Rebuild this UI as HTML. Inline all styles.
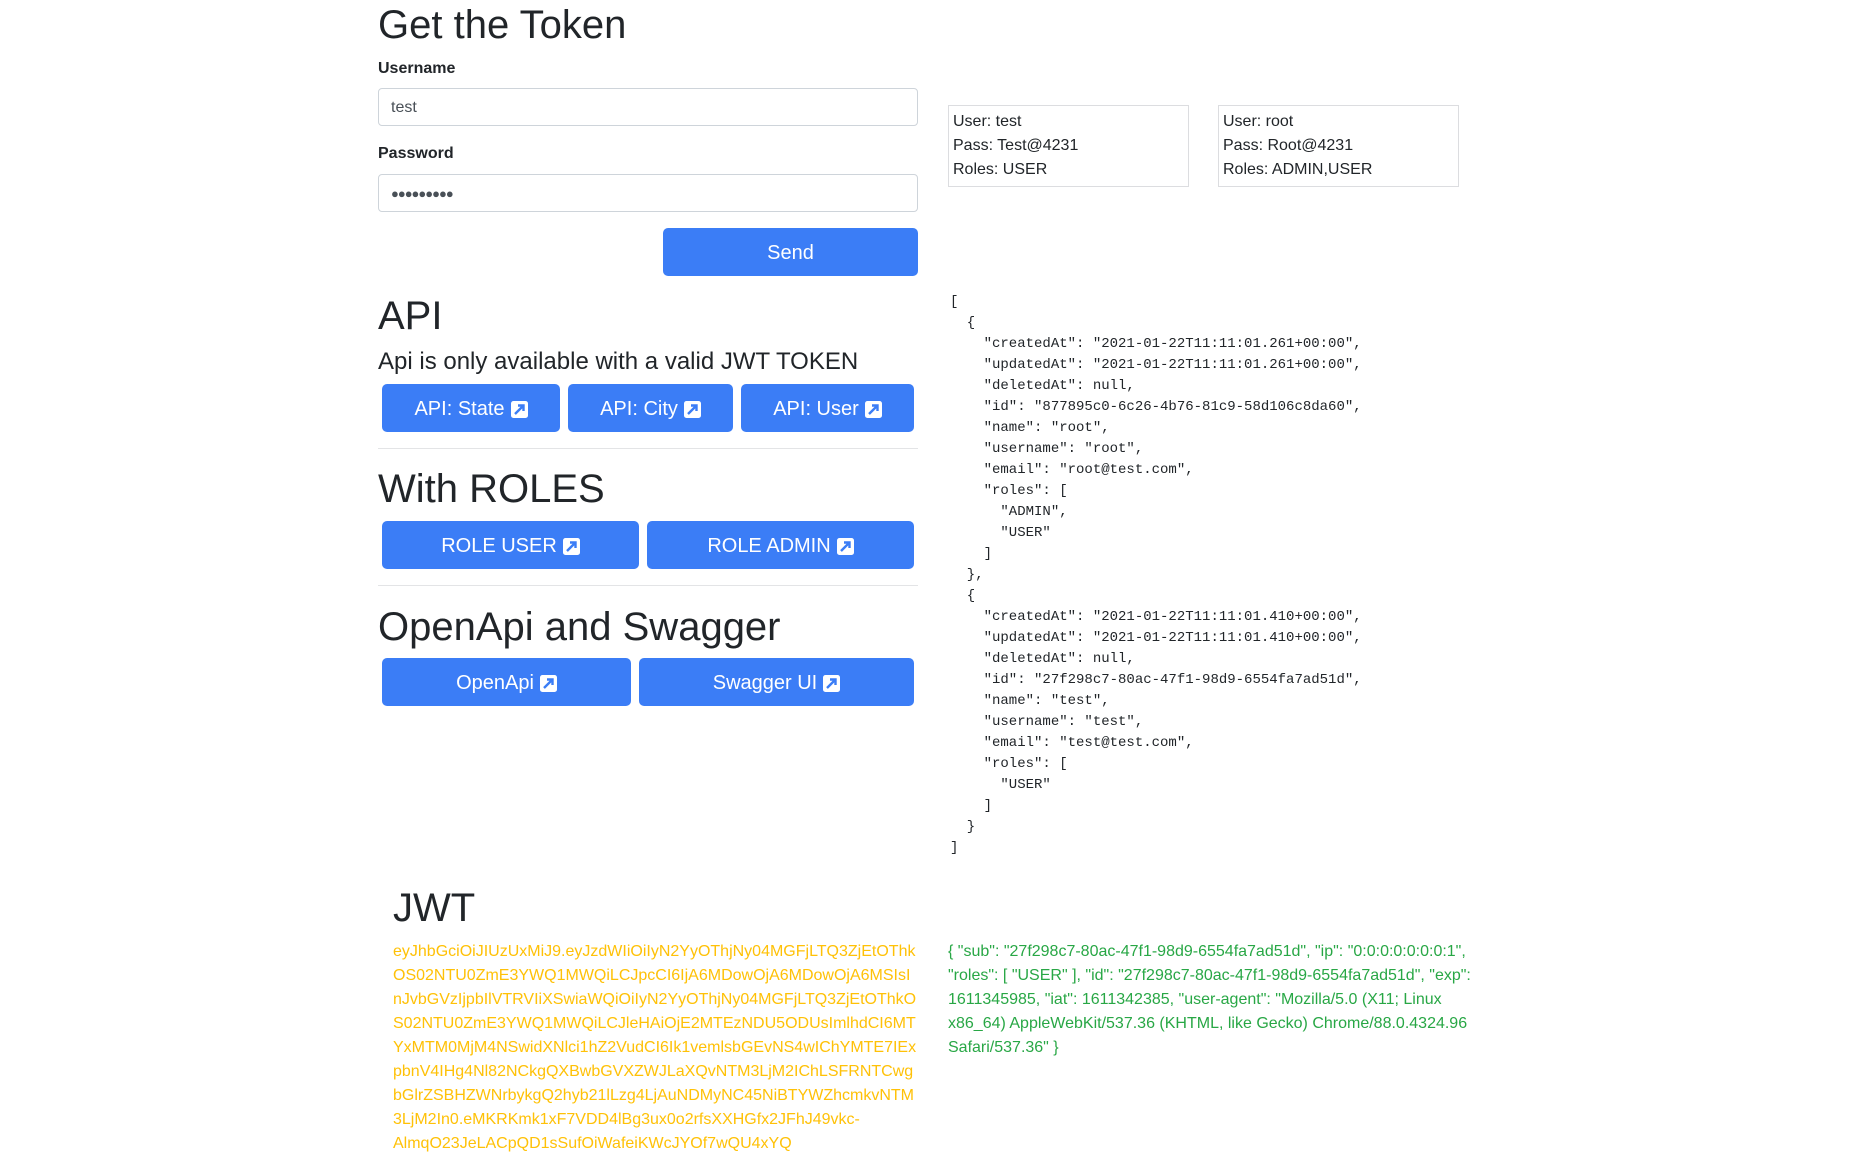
<!DOCTYPE html>
<html><head><meta charset="utf-8">
<style>
*{box-sizing:border-box;margin:0;padding:0}
body{width:1866px;height:1163px;background:#fff;font-family:"Liberation Sans",Arial,sans-serif;color:#212529;position:relative;overflow:hidden;font-size:16px;line-height:24px}
.a{position:absolute}
h1{position:absolute;font-size:40px;font-weight:500;line-height:48px;white-space:nowrap}
.lbl{position:absolute;font-weight:700;font-size:16px;line-height:24px}
.inp{position:absolute;left:378px;width:540px;height:38px;border:1px solid #ced4da;border-radius:4px;padding:0 12px;line-height:38px;color:#495057}
.btn{position:absolute;background:#3b7df6;color:#fff;border-radius:5px;font-size:20px;display:flex;align-items:center;justify-content:center;height:48px;white-space:nowrap;padding-top:2px}
.btn svg{margin-left:6px}
hr{position:absolute;left:378px;width:540px;border:0;border-top:1px solid #e3e4e6}
.box{position:absolute;top:105px;height:82px;border:1px solid #dcdde0;padding:4px 4px 0;width:241px}
pre{position:absolute;left:950px;top:292px;font-family:"Liberation Mono",monospace;font-size:14px;line-height:21px;color:#212529}
.tok{position:absolute;left:393px;top:940px;color:#ffc107;white-space:nowrap}
.grn{position:absolute;left:948px;top:940px;color:#28a745;white-space:nowrap}
</style></head><body>
<h1 style="left:378px;top:1px">Get the Token</h1>
<div class="lbl" style="left:378px;top:57px">Username</div>
<div class="inp" style="top:88px">test</div>
<div class="lbl" style="left:378px;top:142px">Password</div>
<div class="inp" style="top:174px;font-size:13px;letter-spacing:-1px">●●●●●●●●●</div>
<div class="btn" style="left:663px;top:228px;width:255px">Send</div>

<h1 style="left:378px;top:292px">API</h1>
<div class="a" style="left:378px;top:347px;font-size:24px;line-height:29px;white-space:nowrap">Api is only available with a valid JWT TOKEN</div>
<div class="btn" style="left:382px;top:384px;width:178px">API: State <svg width="17" height="17" viewBox="0 0 17 17"><rect width="17" height="17" rx="2.5" fill="#fff"/><path d="M4 13L12 5M7 4.5h5.5V10" stroke="#3b7df6" stroke-width="2.4" fill="none"/></svg></div>
<div class="btn" style="left:568px;top:384px;width:165px">API: City <svg width="17" height="17" viewBox="0 0 17 17"><rect width="17" height="17" rx="2.5" fill="#fff"/><path d="M4 13L12 5M7 4.5h5.5V10" stroke="#3b7df6" stroke-width="2.4" fill="none"/></svg></div>
<div class="btn" style="left:741px;top:384px;width:173px">API: User <svg width="17" height="17" viewBox="0 0 17 17"><rect width="17" height="17" rx="2.5" fill="#fff"/><path d="M4 13L12 5M7 4.5h5.5V10" stroke="#3b7df6" stroke-width="2.4" fill="none"/></svg></div>
<hr style="top:448px">

<h1 style="left:378px;top:465px">With ROLES</h1>
<div class="btn" style="left:382px;top:521px;width:257px">ROLE USER <svg width="17" height="17" viewBox="0 0 17 17"><rect width="17" height="17" rx="2.5" fill="#fff"/><path d="M4 13L12 5M7 4.5h5.5V10" stroke="#3b7df6" stroke-width="2.4" fill="none"/></svg></div>
<div class="btn" style="left:647px;top:521px;width:267px">ROLE ADMIN <svg width="17" height="17" viewBox="0 0 17 17"><rect width="17" height="17" rx="2.5" fill="#fff"/><path d="M4 13L12 5M7 4.5h5.5V10" stroke="#3b7df6" stroke-width="2.4" fill="none"/></svg></div>
<hr style="top:585px">

<h1 style="left:378px;top:603px">OpenApi and Swagger</h1>
<div class="btn" style="left:382px;top:658px;width:249px">OpenApi <svg width="17" height="17" viewBox="0 0 17 17"><rect width="17" height="17" rx="2.5" fill="#fff"/><path d="M4 13L12 5M7 4.5h5.5V10" stroke="#3b7df6" stroke-width="2.4" fill="none"/></svg></div>
<div class="btn" style="left:639px;top:658px;width:275px">Swagger UI <svg width="17" height="17" viewBox="0 0 17 17"><rect width="17" height="17" rx="2.5" fill="#fff"/><path d="M4 13L12 5M7 4.5h5.5V10" stroke="#3b7df6" stroke-width="2.4" fill="none"/></svg></div>

<div class="box" style="left:948px">User: test<br>Pass: Test@4231<br>Roles: USER</div>
<div class="box" style="left:1218px">User: root<br>Pass: Root@4231<br>Roles: ADMIN,USER</div>

<pre>[
  {
    "createdAt": "2021-01-22T11:11:01.261+00:00",
    "updatedAt": "2021-01-22T11:11:01.261+00:00",
    "deletedAt": null,
    "id": "877895c0-6c26-4b76-81c9-58d106c8da60",
    "name": "root",
    "username": "root",
    "email": "root@test.com",
    "roles": [
      "ADMIN",
      "USER"
    ]
  },
  {
    "createdAt": "2021-01-22T11:11:01.410+00:00",
    "updatedAt": "2021-01-22T11:11:01.410+00:00",
    "deletedAt": null,
    "id": "27f298c7-80ac-47f1-98d9-6554fa7ad51d",
    "name": "test",
    "username": "test",
    "email": "test@test.com",
    "roles": [
      "USER"
    ]
  }
]</pre>

<h1 style="left:393px;top:884px">JWT</h1>
<div class="tok">eyJhbGciOiJIUzUxMiJ9.eyJzdWIiOiIyN2YyOThjNy04MGFjLTQ3ZjEtOThk<br>OS02NTU0ZmE3YWQ1MWQiLCJpcCI6IjA6MDowOjA6MDowOjA6MSIsI<br>nJvbGVzIjpbIlVTRVIiXSwiaWQiOiIyN2YyOThjNy04MGFjLTQ3ZjEtOThkO<br>S02NTU0ZmE3YWQ1MWQiLCJleHAiOjE2MTEzNDU5ODUsImlhdCI6MT<br>YxMTM0MjM4NSwidXNlci1hZ2VudCI6Ik1vemlsbGEvNS4wIChYMTE7IEx<br>pbnV4IHg4Nl82NCkgQXBwbGVXZWJLaXQvNTM3LjM2IChLSFRNTCwg<br>bGlrZSBHZWNrbykgQ2hyb21lLzg4LjAuNDMyNC45NiBTYWZhcmkvNTM<br>3LjM2In0.eMKRKmk1xF7VDD4lBg3ux0o2rfsXXHGfx2JFhJ49vkc-<br>AlmqO23JeLACpQD1sSufOiWafeiKWcJYOf7wQU4xYQ</div>
<div class="grn">{ "sub": "27f298c7-80ac-47f1-98d9-6554fa7ad51d", "ip": "0:0:0:0:0:0:0:1",<br>"roles": [ "USER" ], "id": "27f298c7-80ac-47f1-98d9-6554fa7ad51d", "exp":<br>1611345985, "iat": 1611342385, "user-agent": "Mozilla/5.0 (X11; Linux<br>x86_64) AppleWebKit/537.36 (KHTML, like Gecko) Chrome/88.0.4324.96<br>Safari/537.36" }</div>
</body></html>
